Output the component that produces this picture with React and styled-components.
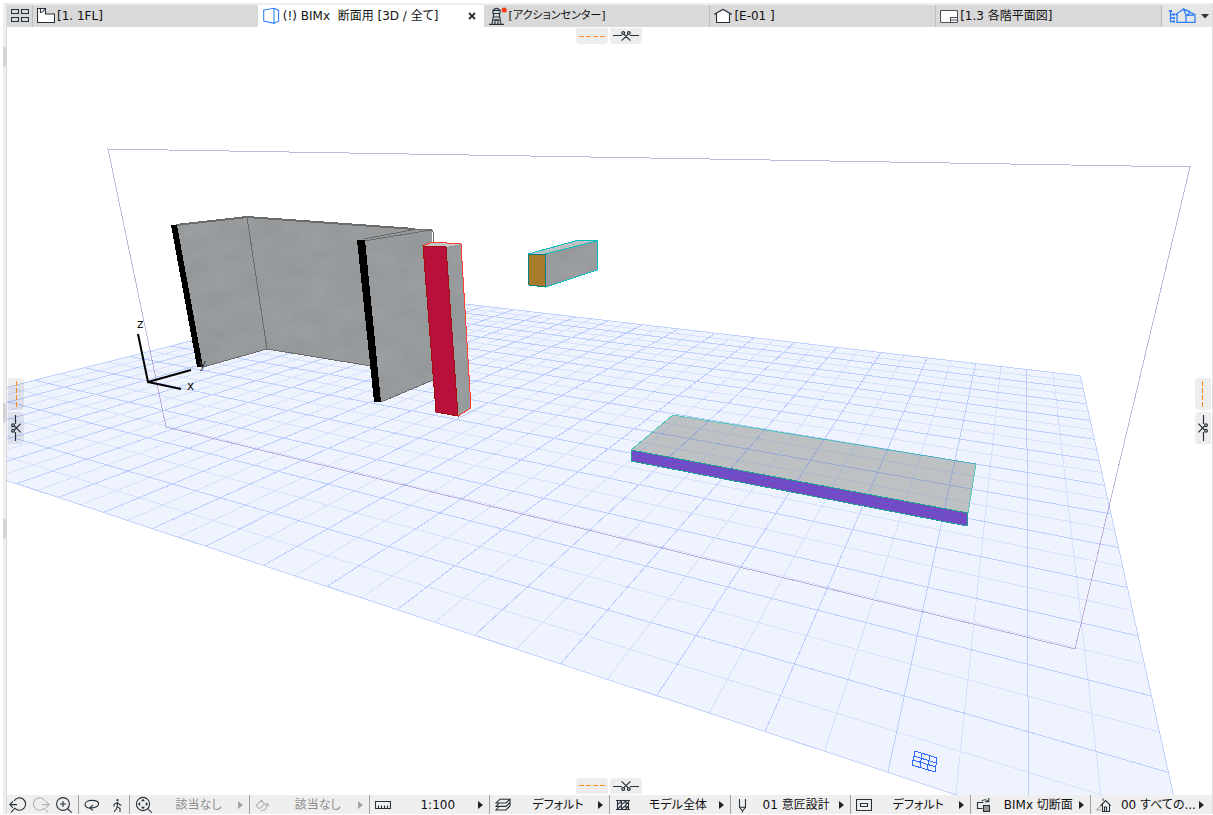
import React from "react";
import styled, { createGlobalStyle } from "styled-components"


const GlobalStyle = createGlobalStyle`
    * {
        box-sizing: border-box;
    }
    body {
        margin: 0;
        background: #fff;
        font-family: "DejaVu Sans", "Noto Sans CJK JP", sans-serif;
        font-feature-settings: "palt";
        font-size: 12px;
        line-height: 16px;
        color: #111;
    }
    button {
        border: 0;
        padding: 0;
        background: none;
        font: inherit;
        font-feature-settings: inherit;
        color: inherit;
        cursor: pointer;
    }
    svg {
        display: block;
        flex: none;
    }
`

const Page = styled.div`
    display: flex;
    height: 100vh;
    min-height: 480px;
    padding: 3px 0 1px 3px;
`

const SideStrip = styled.div`
    display: flex;
    flex-direction: column;
    flex: none;
    width: 4px;
    background: #efefef;
    border-right: 1px solid #d9d9d9;
`

const Notch = styled.div`
    height: 20px;
    margin-top: ${({ $gap }) => $gap}px;
    background: #d4d4d4;
    border-radius: 0 2px 2px 0;
`

const Workspace = styled.main`
    display: flex;
    flex-direction: column;
    flex: 1;
    min-width: 0;
    border-top: 2px solid #efefef;
    border-right: 1px solid #dcdcdc;
`

const TabBar = styled.nav`
    display: flex;
    flex: none;
    height: 22px;
    background: #d9d9d9;
`

const OverviewButton = styled.button`
    display: flex;
    align-items: center;
    justify-content: center;
    width: 25px;
`

const Tab = styled.div`
    display: flex;
    flex: 1;
    min-width: 0;
    background: ${({ $active }) => ($active ? "#fff" : "transparent")};
    border-left: 1px solid ${({ $line, $active }) => ($line ? "#bdbdbd" : $active ? "#fff" : "transparent")};
`

const TabButton = styled.button`
    display: flex;
    align-items: center;
    flex: 1;
    gap: 2px;
    min-width: 0;
    padding-left: 4px;
    font-size: ${({ $small }) => ($small ? 11 : 12)}px;
    white-space: pre;
    overflow: hidden;
`

const CloseButton = styled.button`
    display: flex;
    align-items: center;
    justify-content: center;
    width: 24px;
`

const NavigatorButton = styled.button`
    display: flex;
    align-items: center;
    justify-content: space-between;
    width: 51px;
    padding: 0 3px 0 6px;
    background: #e6e6e6;
    border-left: 1px solid #bdbdbd;
`

const Viewport = styled.section`
    position: relative;
    flex: 1;
    min-height: 0;
    background: #fff;
`

const Scene = styled.svg`
    width: 100%;
    height: 100%;
`

const HandlePair = styled.div`
    position: absolute;
    display: flex;
    gap: 2px;
    ${({ $side }) => ({
        top: "top: 1px; left: calc(round(down, 50%, 1px) - 33px);",
        bottom: "bottom: 1px; left: calc(round(down, 50%, 1px) - 33px);",
        left: "left: 1px; top: calc(round(down, 50%, 1px) - 33px); flex-direction: column;",
        right: "right: 1px; top: calc(round(down, 50%, 1px) - 33px); flex-direction: column;",
    })[$side]}
`

const Handle = styled.button`
    display: flex;
    align-items: center;
    justify-content: center;
    width: ${({ $upright }) => ($upright ? 16 : 32)}px;
    height: ${({ $upright }) => ($upright ? 32 : 16)}px;
    background: rgba(0, 0, 0, 0.07);
    border-radius: ${({ $side }) => ({
        top: "0 0 4px 4px",
        bottom: "4px 4px 0 0",
        left: "0 4px 4px 0",
        right: "4px 0 0 4px",
    })[$side]};
`

const StatusBar = styled.footer`
    display: flex;
    flex: none;
    height: 19px;
    padding-right: 2px;
    background: #efefef;
`

const ToolGroup = styled.div`
    display: flex;
    align-items: center;
    width: ${({ $wide }) => ($wide ? 72 : 51)}px;
    padding-right: ${({ $wide }) => ($wide ? 3 : 0)}px;
    border-right: 1px solid #a0a0a0;
`

const ToolButton = styled.button`
    display: flex;
    align-items: center;
    justify-content: center;
    flex: 1;
`

const Option = styled.button`
    display: flex;
    align-items: center;
    flex: 1;
    min-width: 0;
    padding: 0 6px 0 5px;
    color: ${({ disabled }) => (disabled ? "#8c8c8c" : "#111")};
    border-right: 1px solid #a0a0a0;
    white-space: nowrap;

    &:last-child {
        border-right: 0;
    }
`

const OptionLabel = styled.span`
    flex: 1;
    min-width: 0;
    padding-left: 6px;
    text-align: center;
`

const INK = "#27313b"
const BLUE = "#2f80f6"

const Icon = ({ w = 18, h = 18, color = INK, children }) => (
    <svg width={w} height={h} viewBox={`0 0 ${w} ${h}`} fill="none" stroke={color} strokeWidth="1.1" aria-hidden="true">
        {children}
    </svg>
)

const Arrow = ({ color = "#222" }) => (
    <svg width="5" height="8" viewBox="0 0 5 8" aria-hidden="true">
        <path d="M0 0L5 4L0 8Z" fill={color} />
    </svg>
)

const icons = {
    overview: <Icon><path d="M.5 2.5h7v4h-7zM10.5 2.5h7v4h-7zM.5 10.5h7v4h-7zM10.5 10.5h7v4h-7z" /></Icon>,
    plan: <Icon><path d="M.5 1.5h8v5.5h9v8.5H.5z" fill="#fff" /><path d="M3.5 1.5v4q3.4-.4 4-4" /></Icon>,
    model: <Icon color={BLUE}><path d="M.7 3L11 1.3v15L.7 14z" fill="#fff" /><path d="M11 1.3L15.6 3.4v10.8L11 16.3" /></Icon>,
    lighthouse: (
        <Icon>
            <path d="M3.5 6.5h8M4 6.4v-3h7v3M4 3.4q3.5-4.4 7 0M4.8 6.6L3 17M10.2 6.6L12 17M0 17.4h15M4.4 10h6.2M3.6 13h7.8" />
            <path d="M6 17v-4h3v4" />
            <circle cx="15.2" cy="3" r="2.6" fill="#fa3c12" stroke="none" />
        </Icon>
    ),
    elevation: <Icon><path d="M2.5 7H.9L9 2.5 17.1 7h-1.6v8.5h-13z" fill="#fff" /></Icon>,
    layout: <Icon color="#4a4f55"><rect x=".5" y="3.5" width="17" height="12" rx="1" fill="#fff" /><path d="M10.5 15v-4.5h7M10.5 13h7" /></Icon>,
    navigator: (
        <svg width="28" height="16" viewBox="0 0 28 16" fill="none" stroke={BLUE} strokeWidth="1.3" aria-hidden="true">
            <path d="M2.5 3v10.5H7M2.5 6.5H6M2.5 10H6" />
            <path d="M1 2h3v2H1zM5 5.5h2v2H5zM5 9h2v2H5zM5 12.5h2v2H5z" fill={BLUE} stroke="none" />
            <path d="M9 14.4V7l-1-.8L15.5 1 27 6.6v7.8zM9 7h1M18 14.4V7.3L15.5 1 22 3.5M18 8.4l4.5-4.6M18 7.3L26 7" />
        </svg>
    ),
    undoZoom: <Icon><path d="M5 5A6.2 6.2 0 1 1 5.8 12.2L2 16.4M.8 8.6H8M4 5.4L.8 8.6 4 11.8" /></Icon>,
    redoZoom: <Icon color="#b5b5b5"><path d="M13 5A6.2 6.2 0 1 0 12.2 12.2L16 16.4M17.2 8.6H10M14 5.4l3.2 3.2-3.2 3.2" /></Icon>,
    zoom: <Icon><circle cx="8" cy="8" r="6.4" /><path d="M5 8h6M8 5v6M12.5 12.5l4.2 4.2" /></Icon>,
    orbit: <Icon w={16}><path d="M6 12.2C2.8 11.6 1 10.2 1 8.4 1 6 4.2 4.4 8 4.4s6.6 1.5 6.6 3.6c0 2.2-3.3 4-7.8 4M9 8.8L5.8 12 9 14.6" /></Icon>,
    walk: <Icon w={12}><circle cx="6.5" cy="4.2" r="1.1" fill={INK} stroke="none" /><path d="M6.3 6v5M6.3 6.4L3 8.4v2M6.5 6.6l2 2 2 .8M6.3 10.6L9 12.6V16M6.2 10.8L5.4 13 3 15.6" /></Icon>,
    fit: (
        <Icon>
            <circle cx="8" cy="8" r="6.6" />
            <path d="M12.7 12.7l4 4" />
            <path d="M8 2.8l2 2.4H6zM8 13.2l2-2.4H6zM2.8 8l2.4-2v4zM13.2 8l-2.4-2v4z" fill={INK} stroke="none" />
        </Icon>
    ),
    rotate: <Icon w={16} color="#b0b0b0"><path d="M1 9.6l5.4-5.2 3.2 3.4-5.2 5zM6 14.6c4 .4 6-2.2 6.2-6M10 9.8l2.2-2.4 2.4 2.4" /></Icon>,
    scale: <Icon w={16}><path d="M.5 5.5h15v7H.5zM3.5 12V9.5M6.5 12V9.5M9.5 12V9.5M12.5 12V9.5" /></Icon>,
    layers: <Icon w={16}><path d="M5 3.2h10L11 7H1zM3.6 7.6L1 10.4h10l4-4M3.6 11L1 14h10l4-4M15 3.2V10" /></Icon>,
    hatch: <Icon w={16}><path d="M2.5 4.5h11v9h-11zM1 4.5h14M1 13.5h14M2.6 8.6L6.4 5v3.6L11 5v3.6L13.4 6M2.6 13L6.4 9.4V13L11 9.4V13l2.6-3.4" /></Icon>,
    pen: <Icon w={12}><path d="M3.5 3v8.4L6.5 15l3-3.6V3M3.5 11.2h6M6.5 15v1.6" /></Icon>,
    frame: <Icon w={16}><path d="M.5 3.5h15v11H.5zM4.5 7.5h7v3h-7z" /></Icon>,
    override: <Icon w={16}><path d="M6.5 12.5h-5v-6h6M5.6 5.2Q9 2.2 12.4 5.4M12.8 2v3.8H9" /><rect x="7.5" y="9.5" width="6" height="6" fill="#999" /></Icon>,
    house: <Icon w={16}><path d="M5 14H.8L8.6 5.6" stroke="#aaa" /><path d="M7 2.4v2.4M4.6 9.6L9.6 4.6l5 5M6.5 8.6v6.9h7V8.6M8.5 15.4V11h2v4.4" /></Icon>,
}

const Dashes = ({ side, upright }) => {
    const at = side === "top" || side === "left" ? 1.5 : 0.5
    return (
        <svg width={upright ? 2 : 26} height={upright ? 26 : 2} aria-hidden="true">
            <path d={upright ? `M${at} 0v26` : `M0 ${at}h26`} stroke="#fb8a1e" strokeWidth="1" strokeDasharray="5 2" />
        </svg>
    )
}

const turns = { top: 0, bottom: 180, left: 270, right: 90 }

const Scissors = ({ side }) => {
    const upright = side === "left" || side === "right"
    return (
        <svg
            width={upright ? 12 : 28}
            height={upright ? 28 : 12}
            viewBox={upright ? "-6 -14 12 28" : "-14 -6 28 12"}
            fill="none"
            stroke={INK}
            strokeWidth="1.2"
            aria-hidden="true"
        >
            <g transform={`rotate(${turns[side]})`}>
                <path d="M-13 -.5H-4M4 -.5H13M-2 -1.6L4.4 4.6M2 -1.6L-4.4 4.6" />
                <circle cx="-2.8" cy="-3" r="1.4" />
                <circle cx="2.8" cy="-3" r="1.4" />
            </g>
        </svg>
    )
}

const SectionHandles = ({ side }) => {
    const upright = side === "left" || side === "right"
    return (
        <HandlePair $side={side}>
            <Handle $side={side} $upright={upright} aria-label="cutting plane">
                <Dashes side={side} upright={upright} />
            </Handle>
            <Handle $side={side} $upright={upright} aria-label="cut">
                <Scissors side={side} />
            </Handle>
        </HandlePair>
    )
}

// ground plane: m runs to the left along the far edge, n runs towards the camera
const COLS = 19
const ROWS = 13

const project = (m, n) => {
    const d = 1 + 0.0256 * m - 0.05152 * n
    return [(1080.3 - 27.28 * m - 52.85 * n) / d, (375.67 + 3.21 * m - 6.732 * n) / d]
}

const segment = (a, b) => `M${a.map((v) => v.toFixed(1)).join(" ")}L${b.map((v) => v.toFixed(1)).join(" ")}`

const gridPath = (offset) => {
    const parts = []
    for (let m = offset; m <= COLS; m++) parts.push(segment(project(m, 0), project(m, ROWS)))
    for (let n = offset; n <= ROWS; n++) parts.push(segment(project(0, n), project(COLS, n)))
    return parts.join("")
}

const planeOutline = [[0, 0], [COLS, 0], [COLS, ROWS], [0, ROWS]].map(([m, n]) => project(m, n).join(",")).join(" ")

const Ground = () => (
    <g shapeRendering="crispEdges" fill="none">
        <polygon points={planeOutline} fill="#3366f5" fillOpacity="0.08" />
        <path d={gridPath(0.5)} stroke="#4a86f5" strokeOpacity="0.15" />
        <path d={gridPath(0)} stroke="#3a70fa" strokeOpacity="0.28" />
    </g>
)

const Slab = () => (
    <g strokeWidth="1" shapeRendering="crispEdges">
        <polygon points="673,415 976,464 968,513 631,450" fill="#cac9bf" />
        <polygon points="631,450 968,513 967,526 631,461" fill="#7a48c0" />
        <path d="M631 450L673 415L976 464L968 513" fill="none" stroke="#5bd0b4" />
        <path d="M631 450L968 513L967 526L631 461Z" fill="none" stroke="#1fa58c" />
    </g>
)

const Walls = () => (
    <g shapeRendering="crispEdges">
        <polygon points="247,217 420,229 420,374 371,366 267,349" fill="url(#concrete)" />
        <polygon points="176,225 247,217 267,349 203,367" fill="url(#concrete)" />
        <path d="M176 225L247 217L415 229" fill="none" stroke="#6b6b6b" strokeWidth="2" />
        <path d="M247 217L267 349L371 366M203 367L267 349" fill="none" stroke="#6b6b6b" />
        <polygon points="364,240 417,230 432,230 434,380 381,402" fill="url(#concrete)" />
        <path d="M415 229L431 229L433 232L433 380L381 402M364 241L431 230M364 239L417 229" fill="none" stroke="#6b6b6b" />
        <polygon points="171,225 177,225 203,367 197,367" fill="#000" />
        <polygon points="357,240 365,240 381,402 374,402" fill="#000" />
    </g>
)

const Column = () => (
    <g shapeRendering="crispEdges">
        <polygon points="446,247 461,244 471,408 458,416" fill="url(#concrete)" />
        <polygon points="422,246 433,242 461,244 446,247" fill="#c4c6c6" />
        <path d="M422 246L433 242L461 244L471 408L458 416" fill="none" stroke="#ff4032" />
        <polygon points="423,246 446,247 458,416 436,412" fill="#b9103b" stroke="#a01010" />
    </g>
)

const Beam = () => (
    <g shapeRendering="crispEdges">
        <polygon points="545,254 597,241 597,270 546,287" fill="url(#concrete)" stroke="#06bcc0" />
        <polygon points="528,254 579,240 597,241 545,254" fill="#bcc1c1" stroke="#06bcc0" />
        <polygon points="528,254 545,254 546,287 529,285" fill="#a67c2b" stroke="#067f80" />
    </g>
)

const Axes = () => (
    <g stroke="#000" strokeWidth="2" fill="none">
        <path d="M138 334L148 382L191 370M148 382L181 389" />
        <g fill="#111" stroke="none" fontSize="12" fontFamily="DejaVu Sans, sans-serif">
            <text x="137" y="328">z</text>
            <text x="199" y="368" fill="#444">y</text>
            <text x="187" y="390">x</text>
        </g>
    </g>
)

const ModelView = () => (
    <Scene viewBox="7 27 1205 768" role="img" aria-label="3D">
        <defs>
            <filter id="grain" x="0" y="0" width="100%" height="100%" colorInterpolationFilters="sRGB">
                <feTurbulence type="fractalNoise" baseFrequency="0.03 0.05" numOctaves="3" seed="4" />
                <feColorMatrix values="0.16 0 0 0 0.51  0.16 0 0 0 0.52  0.16 0 0 0 0.53  0 0 0 0 1" />
            </filter>
            <pattern id="concrete" width="1205" height="768" patternUnits="userSpaceOnUse">
                <rect width="1205" height="768" fill="#989b9c" />
                <rect width="1205" height="768" filter="url(#grain)" opacity="0.35" />
            </pattern>
        </defs>
        <Slab />
        <Ground />
        <path d="M108 149L1190 167L1075 649L166 427Z" fill="none" stroke="#9a78bd" strokeOpacity="0.55" shapeRendering="crispEdges" />
        <Walls />
        <Column />
        <Beam />
        <Axes />
        <path
            d="M915 751L937 758L935 772L912 765ZM922 753L920 767M930 756L927 770M914 756L936 763M913 760L936 767"
            fill="none"
            stroke="#2f6bff"
            shapeRendering="crispEdges"
        />
    </Scene>
)

const tabs = [
    { icon: icons.plan, title: "[1. 1FL]", line: true },
    { icon: icons.model, title: "(!) BIMx  断面用 [3D / 全て]", active: true },
    { icon: icons.lighthouse, title: "[アクションセンター]", small: true },
    { icon: icons.elevation, title: "[E-01 ]", line: true },
    { icon: icons.layout, title: "[1.3 各階平面図]", line: true },
]

const options = [
    { icon: icons.fit, label: "該当なし", disabled: true },
    { icon: icons.rotate, label: "該当なし", disabled: true },
    { icon: icons.scale, label: "1:100" },
    { icon: icons.layers, label: "デフォルト" },
    { icon: icons.hatch, label: "モデル全体" },
    { icon: icons.pen, label: "01 意匠設計" },
    { icon: icons.frame, label: "デフォルト" },
    { icon: icons.override, label: "BIMx 切断面" },
    { icon: icons.house, label: "00 すべての..." },
]

const App = () => {
    return (
        <Page>
            <GlobalStyle />
            <SideStrip>
                <Notch $gap={44} />
                <Notch $gap={336} />
                <Notch $gap={96} />
            </SideStrip>
            <Workspace>
                <TabBar>
                    <OverviewButton aria-label="tabs">{icons.overview}</OverviewButton>
                    {tabs.map((tab) => (
                        <Tab key={tab.title} $active={tab.active} $line={tab.line}>
                            <TabButton $small={tab.small}>
                                {tab.icon}
                                <span>{tab.title}</span>
                            </TabButton>
                            {tab.active ? (
                                <CloseButton aria-label="close">
                                    <Icon w={8} h={8}><path d="M1 1l6 6M7 1L1 7" strokeWidth="1.8" /></Icon>
                                </CloseButton>
                            ) : null}
                        </Tab>
                    ))}
                    <NavigatorButton aria-label="navigator">
                        {icons.navigator}
                        <svg width="8" height="5" viewBox="0 0 8 5" aria-hidden="true"><path d="M0 0H8L4 4.5Z" fill="#333" /></svg>
                    </NavigatorButton>
                </TabBar>
                <Viewport>
                    <ModelView />
                    <SectionHandles side="top" />
                    <SectionHandles side="bottom" />
                    <SectionHandles side="left" />
                    <SectionHandles side="right" />
                </Viewport>
                <StatusBar>
                    <ToolGroup $wide>
                        <ToolButton aria-label="previous zoom">{icons.undoZoom}</ToolButton>
                        <ToolButton aria-label="next zoom" disabled>{icons.redoZoom}</ToolButton>
                        <ToolButton aria-label="zoom">{icons.zoom}</ToolButton>
                    </ToolGroup>
                    <ToolGroup>
                        <ToolButton aria-label="orbit">{icons.orbit}</ToolButton>
                        <ToolButton aria-label="walk">{icons.walk}</ToolButton>
                    </ToolGroup>
                    {options.map((option, i) => (
                        <Option key={i} disabled={option.disabled}>
                            {option.icon}
                            <OptionLabel>{option.label}</OptionLabel>
                            <Arrow color={option.disabled ? "#a3a3a3" : "#222"} />
                        </Option>
                    ))}
                </StatusBar>
            </Workspace>
        </Page>
    );
}

export default App;
